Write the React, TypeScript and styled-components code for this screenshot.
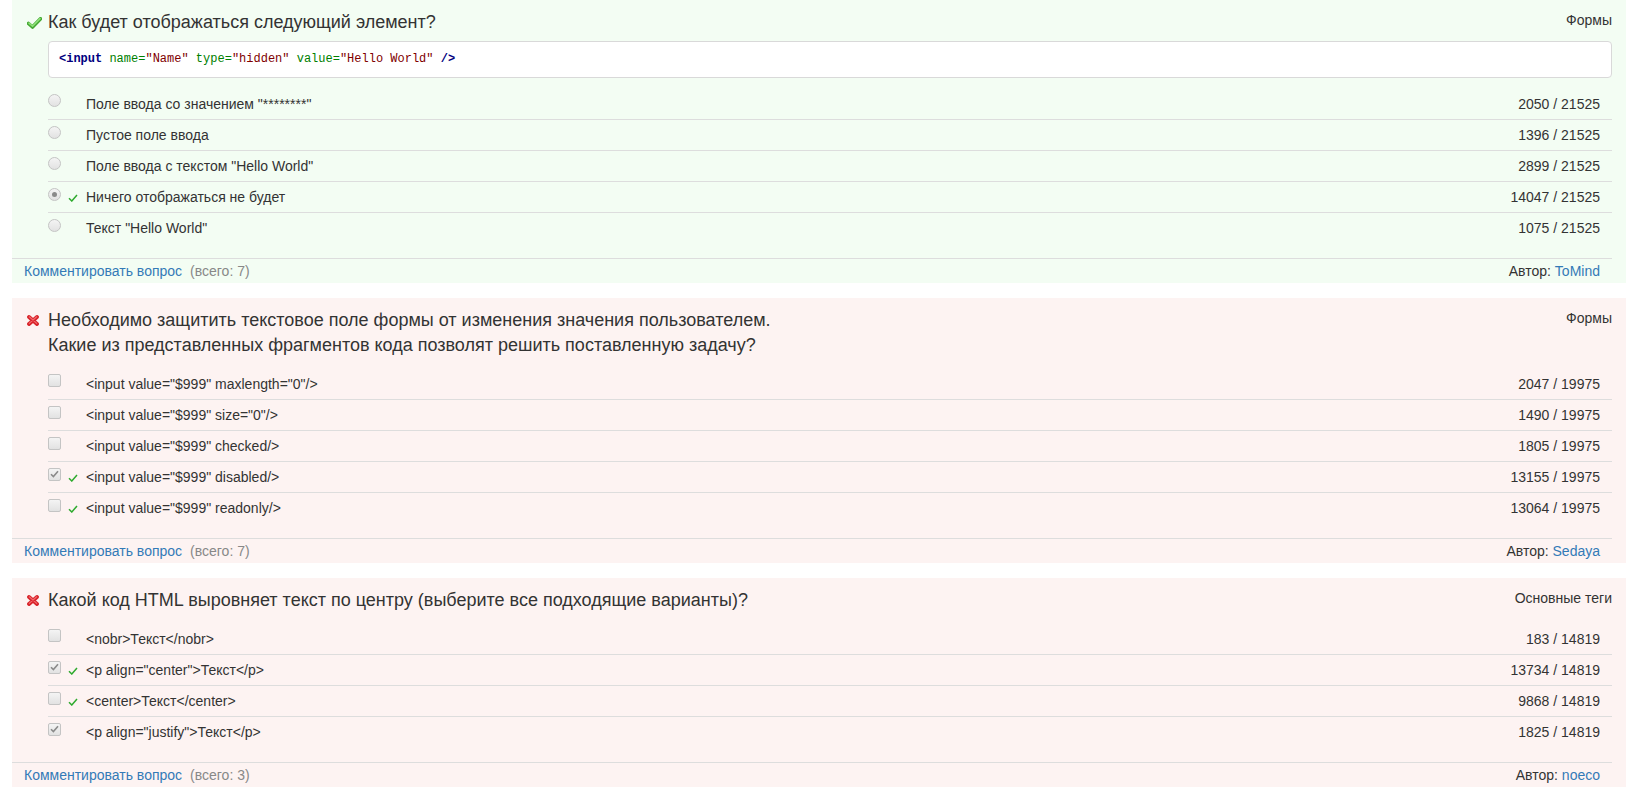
import React from 'react';
import styled, {createGlobalStyle} from 'styled-components';

const GlobalStyle = createGlobalStyle`
    body {
        margin: 0;
        background: #fff;
        font-family: "Liberation Sans", Arial, sans-serif;
        color: #333;
    }
`

const Page = styled.div`
    padding: 0 5px 0 12px;
`

const Panel = styled.div<{ok: boolean}>`
    background-color: ${p => p.ok ? '#f3fdf3' : '#fdf3f2'};
    padding: 10px 14px 0 0;
    margin-bottom: 15px;
`

const Header = styled.div`
    display: flex;
    align-items: flex-start;
    padding-left: 15px;
`

const StatusIcon = styled.span`
    width: 21px;
    flex: none;
    height: 25px;
    display: flex;
    align-items: center;
`

const Title = styled.h4`
    flex: 1;
    margin: 0;
    font-size: 18px;
    font-weight: normal;
    line-height: 25px;
`

const Category = styled.span`
    font-size: 14px;
    line-height: 25px;
    margin-top: -2px;
`

const Content = styled.div`
    margin-left: 36px;
    margin-top: 10px;
`

const Code = styled.pre`
    margin: -4px 0 10px 0;
    background: #fff;
    border: 1px solid #d9d9d9;
    border-radius: 4px;
    height: 35px;
    line-height: 35px;
    padding: 0 10px;
    font-family: "Liberation Mono", "DejaVu Sans Mono", monospace;
    font-size: 12px;
    white-space: pre;
`

const Tag = styled.span`
    color: #000080;
    font-weight: bold;
`

const Attr = styled.span`
    color: #008000;
`

const Val = styled.span`
    color: #800000;
`

const Row = styled.div`
    display: grid;
    grid-template-columns: 20px 18px 1fr auto;
    align-items: center;
    height: 30px;
    font-size: 14px;
    border-top: 1px solid #dddddd;

    &:first-child {
        border-top: none;
        height: 31px;
    }
`

const Count = styled.span`
    padding-right: 12px;
`

const Box = styled.span<{round?: boolean}>`
    width: 11px;
    height: 11px;
    border: 1px solid #c4c4c4;
    border-radius: ${p => p.round ? '50%' : '2px'};
    background: linear-gradient(#f4f4f4, #e2e2e2);
    display: flex;
    align-items: center;
    justify-content: center;
    margin-top: -6px;
`

const Dot = styled.span`
    width: 5px;
    height: 5px;
    border-radius: 50%;
    background: #8a8a8a;
`

const Footer = styled.div`
    margin-top: 15px;
    border-top: 1px solid #dddddd;
    display: flex;
    justify-content: space-between;
    padding: 0 12px;
    height: 24px;
    align-items: center;
    font-size: 14px;
`

const Link = styled.a`
    color: #337ab7;
    text-decoration: none;
`

const Muted = styled.span`
    color: #888;
    margin-left: 8px;
`

const BigTick = () => (
    <svg width="15" height="12" viewBox="0 0 15 12">
        <path d="M1.5 6.5 L5.5 10 L13.5 1.8" fill="none" stroke="#44a832" strokeWidth="3.6" strokeLinecap="round" strokeLinejoin="round" />
        <path d="M2 6.2 L5.5 9.2 L13 1.6" fill="none" stroke="#8fe07a" strokeWidth="1.6" strokeLinecap="round" strokeLinejoin="round" />
    </svg>
)

const BigCross = () => (
    <svg width="12" height="11" viewBox="0 0 12 11">
        <path d="M2 2 L10 9 M10 2 L2 9" fill="none" stroke="#d8232a" strokeWidth="3.8" strokeLinecap="round" />
        <path d="M2.3 1.8 L9.7 8.4 M9.7 1.8 L2.3 8.4" fill="none" stroke="#f26a6e" strokeWidth="1.2" strokeLinecap="round" />
    </svg>
)

const SmallTick = () => (
    <svg width="10" height="8" viewBox="0 0 10 8" style={{marginTop: -2}}>
        <path d="M1 4.2 L3.8 7 L9 1" fill="none" stroke="#2eaa2e" strokeWidth="1.5" />
    </svg>
)

const GrayTick = () => (
    <svg width="9" height="8" viewBox="0 0 9 8">
        <path d="M1 4.2 L3.4 6.6 L8 1.2" fill="none" stroke="#8a8a8a" strokeWidth="1.6" />
    </svg>
)

interface Option {
    text: string;
    count: string;
    checked?: boolean;
    right?: boolean;
}

interface Question {
    ok: boolean;
    title: React.ReactNode;
    category: string;
    radio?: boolean;
    code?: React.ReactNode;
    options: Option[];
    comments: number;
    author: string;
}

const questions: Question[] = [
    {
        ok: true,
        title: 'Как будет отображаться следующий элемент?',
        category: 'Формы',
        radio: true,
        code: <>
            <Tag>&lt;input</Tag>{' '}<Attr>name=</Attr><Val>"Name"</Val>{' '}<Attr>type=</Attr><Val>"hidden"</Val>{' '}<Attr>value=</Attr><Val>"Hello World"</Val>{' '}<Tag>/&gt;</Tag>
        </>,
        options: [
            {text: 'Поле ввода со значением "********"', count: '2050 / 21525'},
            {text: 'Пустое поле ввода', count: '1396 / 21525'},
            {text: 'Поле ввода с текстом "Hello World"', count: '2899 / 21525'},
            {text: 'Ничего отображаться не будет', count: '14047 / 21525', checked: true, right: true},
            {text: 'Текст "Hello World"', count: '1075 / 21525'},
        ],
        comments: 7,
        author: 'ToMind',
    },
    {
        ok: false,
        title: <>Необходимо защитить текстовое поле формы от изменения значения пользователем.<br />Какие из представленных фрагментов кода позволят решить поставленную задачу?</>,
        category: 'Формы',
        options: [
            {text: '<input value="$999" maxlength="0"/>', count: '2047 / 19975'},
            {text: '<input value="$999" size="0"/>', count: '1490 / 19975'},
            {text: '<input value="$999" checked/>', count: '1805 / 19975'},
            {text: '<input value="$999" disabled/>', count: '13155 / 19975', checked: true, right: true},
            {text: '<input value="$999" readonly/>', count: '13064 / 19975', right: true},
        ],
        comments: 7,
        author: 'Sedaya',
    },
    {
        ok: false,
        title: 'Какой код HTML выровняет текст по центру (выберите все подходящие варианты)?',
        category: 'Основные теги',
        options: [
            {text: '<nobr>Текст</nobr>', count: '183 / 14819'},
            {text: '<p align="center">Текст</p>', count: '13734 / 14819', checked: true, right: true},
            {text: '<center>Текст</center>', count: '9868 / 14819', right: true},
            {text: '<p align="justify">Текст</p>', count: '1825 / 14819', checked: true},
        ],
        comments: 3,
        author: 'noeco',
    },
]

const QuestionPanel = ({q}: {q: Question}) => (
    <Panel ok={q.ok}>
        <Header>
            <StatusIcon>{q.ok ? <BigTick /> : <BigCross />}</StatusIcon>
            <Title>{q.title}</Title>
            <Category>{q.category}</Category>
        </Header>
        <Content>
            {q.code && <Code>{q.code}</Code>}
            <div>
                {q.options.map((o, i) => (
                    <Row key={i}>
                        <Box round={q.radio}>
                            {o.checked && (q.radio ? <Dot /> : <GrayTick />)}
                        </Box>
                        <span>{o.right && <SmallTick />}</span>
                        <span>{o.text}</span>
                        <Count>{o.count}</Count>
                    </Row>
                ))}
            </div>
        </Content>
        <Footer>
            <span>
                <Link href="#">Комментировать вопрос</Link>
                <Muted>(всего: {q.comments})</Muted>
            </span>
            <span>Автор: <Link href="#">{q.author}</Link></span>
        </Footer>
    </Panel>
)

export default function App() {
    return <>
        <GlobalStyle />
        <Page>
            {questions.map((q, i) => <QuestionPanel key={i} q={q} />)}
        </Page>
    </>
}
